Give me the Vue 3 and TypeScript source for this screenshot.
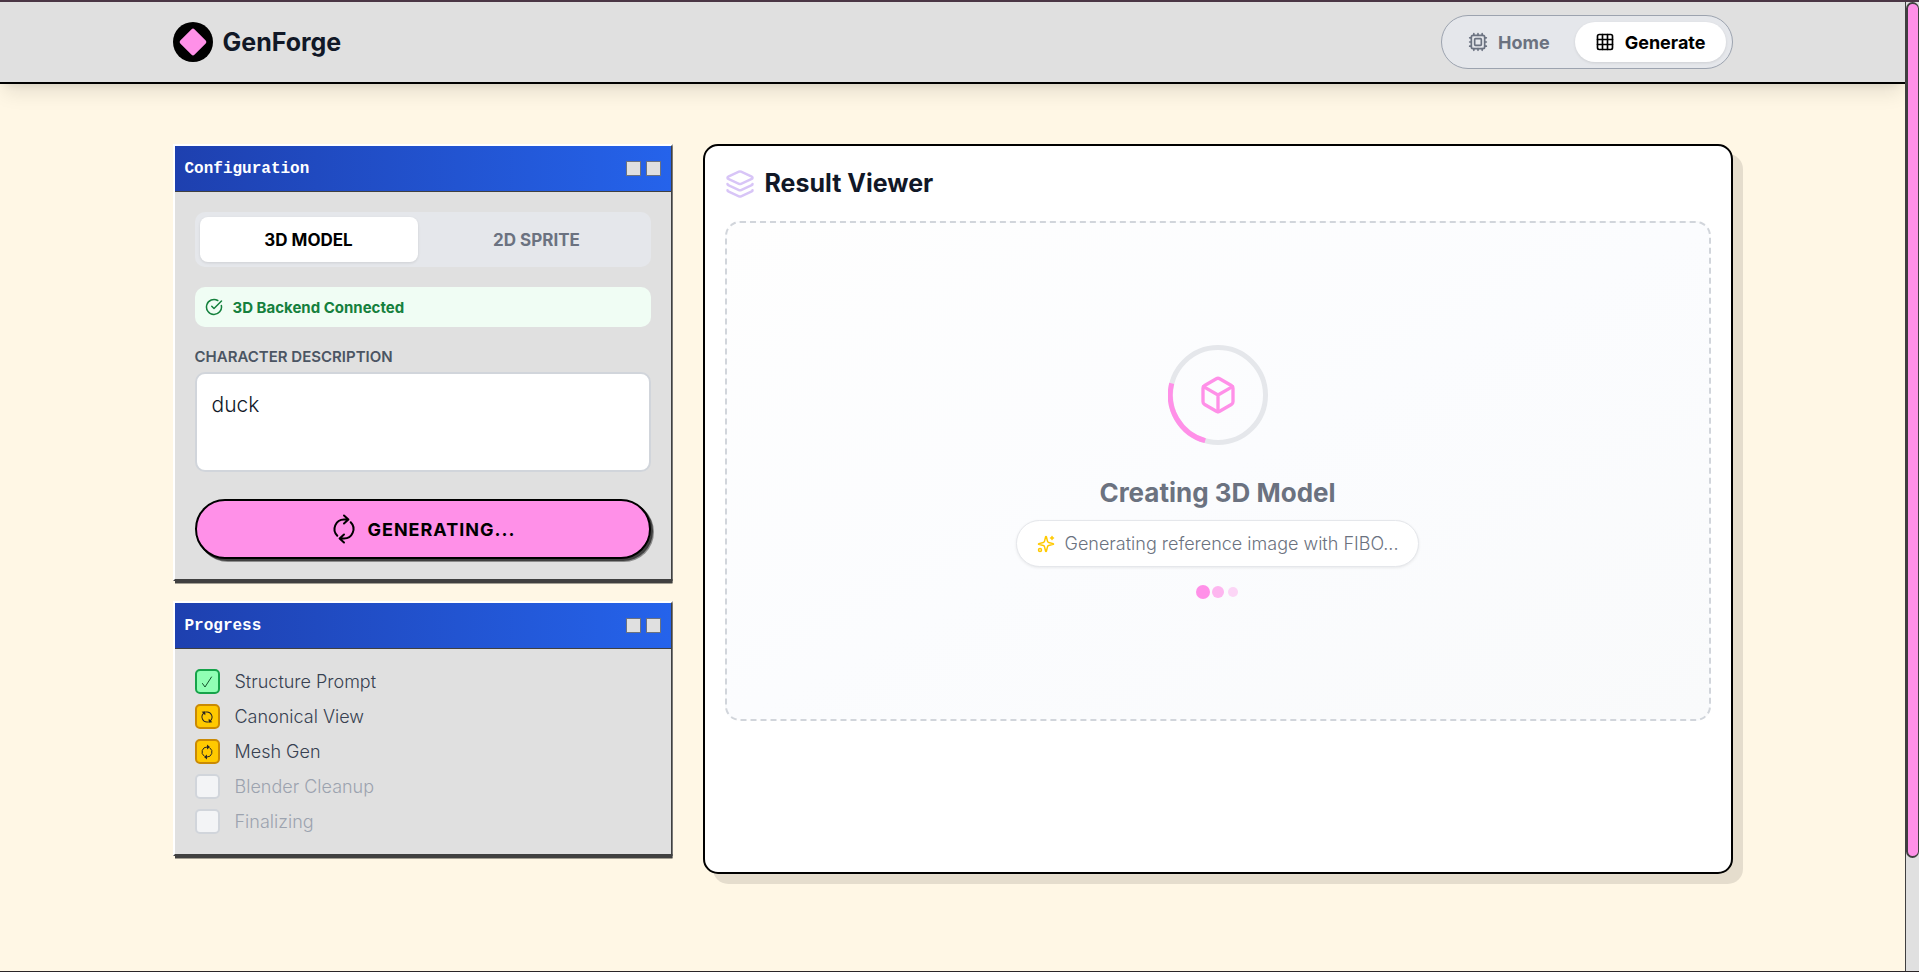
<script setup lang="ts">
import { ref } from 'vue'

type Status = 'done' | 'active' | 'pending'
interface Step {
  label: string
  status: Status
  turned?: boolean
}

const mode = ref<'3d' | '2d'>('3d')
const description = ref('duck')

const steps: Step[] = [
  { label: 'Structure Prompt', status: 'done' },
  { label: 'Canonical View', status: 'active', turned: true },
  { label: 'Mesh Gen', status: 'active' },
  { label: 'Blender Cleanup', status: 'pending' },
  { label: 'Finalizing', status: 'pending' },
]
</script>

<template>
  <div class="app">
    <div class="page">
      <header class="topbar">
        <div class="topbar-inner">
          <div class="brand">
            <span class="logo"><span class="diamond"></span></span>
            <span class="brand-name">GenForge</span>
          </div>
          <nav class="nav">
            <a href="#home" class="nav-link">
              <svg class="nav-icon" viewBox="0 0 24 24">
                <rect x="4" y="4" width="16" height="16" rx="2" />
                <rect x="8" y="8" width="8" height="8" rx="1" />
                <path d="M12 20v2M12 2v2M17 20v2M17 2v2M7 20v2M7 2v2M2 12h2M2 17h2M2 7h2M20 12h2M20 17h2M20 7h2" />
              </svg>
              Home
            </a>
            <a href="#generate" class="nav-link current" aria-current="page">
              <svg class="nav-icon" viewBox="0 0 24 24">
                <rect x="3" y="3" width="18" height="18" rx="2" />
                <path d="M3 9h18M3 15h18M9 3v18M15 3v18" />
              </svg>
              Generate
            </a>
          </nav>
        </div>
      </header>

      <main class="content">
        <div class="sidebar">
          <section class="window">
            <div class="titlebar">
              <h2 class="window-title">Configuration</h2>
              <span class="controls"><i></i><i></i></span>
            </div>
            <div class="window-body">
              <div class="switch">
                <button type="button" :class="{ on: mode === '3d' }" @click="mode = '3d'">3D MODEL</button>
                <button type="button" :class="{ on: mode === '2d' }" @click="mode = '2d'">2D SPRITE</button>
              </div>
              <div class="status">
                <svg class="status-icon" viewBox="0 0 24 24">
                  <path d="M21.8 10A10 10 0 1 1 17 3.335" />
                  <path d="m9 11 3 3L22 4" />
                </svg>
                3D Backend Connected
              </div>
              <div class="field">
                <label for="description">CHARACTER DESCRIPTION</label>
                <textarea id="description" v-model="description"></textarea>
              </div>
              <button type="button" class="generate">
                <svg class="generate-icon" viewBox="-15 -15 30 30">
                  <path d="M-6.7 6.7A9.5 9.5 0 0 1 0 -9.5H4M0 -13.5L4.4 -9.5L0 -5.5" />
                  <path d="M6.7 -6.7A9.5 9.5 0 0 1 0 9.5H-4M0 13.5L-4.4 9.5L0 5.5" />
                </svg>
                GENERATING...
              </button>
            </div>
          </section>

          <section class="window">
            <div class="titlebar">
              <h2 class="window-title">Progress</h2>
              <span class="controls"><i></i><i></i></span>
            </div>
            <ul class="window-body steps">
              <li v-for="step in steps" :key="step.label" :class="step.status">
                <span class="box">
                  <svg v-if="step.status === 'done'" viewBox="-10 -10 20 20">
                    <path d="M-4.5 1.5L-2 5L4.5 -5" />
                  </svg>
                  <svg v-else-if="step.status === 'active'" viewBox="-10 -10 20 20" :class="{ turned: step.turned }">
                    <path d="M-3 4A5 5 0 0 1 0 -5H1" />
                    <path d="M3 -4A5 5 0 0 1 0 5H-1" />
                    <path class="head" d="M0 -7.5L3 -5L0 -2.5ZM0 7.5L-3 5L0 2.5Z" />
                  </svg>
                </span>
                {{ step.label }}
              </li>
            </ul>
          </section>
        </div>

        <section class="viewer">
          <h2 class="viewer-title">
            <svg class="layers" viewBox="0 0 24 24">
              <path d="M12.83 2.18a2 2 0 0 0-1.66 0L2.6 6.08a1 1 0 0 0 0 1.83l8.58 3.91a2 2 0 0 0 1.66 0l8.58-3.9a1 1 0 0 0 0-1.83z" />
              <path d="M2 12a1 1 0 0 0 .58.91l8.6 3.91a2 2 0 0 0 1.65 0l8.58-3.9A1 1 0 0 0 22 12" />
              <path d="M2 17a1 1 0 0 0 .58.91l8.6 3.91a2 2 0 0 0 1.65 0l8.58-3.9A1 1 0 0 0 22 17" />
            </svg>
            Result Viewer
          </h2>
          <div class="stage">
            <div class="spinner">
              <svg class="ring" viewBox="0 0 100 100">
                <circle cx="50" cy="50" r="47.5" stroke="#e5e7eb" />
                <path d="M3.7 38.4A47.5 47.5 0 0 0 37.2 95.7" stroke="#ff90e8" />
              </svg>
              <svg class="cube" viewBox="0 0 24 24">
                <path d="M21 8a2 2 0 0 0-1-1.73l-7-4a2 2 0 0 0-2 0l-7 4A2 2 0 0 0 3 8v8a2 2 0 0 0 1 1.73l7 4a2 2 0 0 0 2 0l7-4A2 2 0 0 0 21 16Z" />
                <path d="m3.3 7 8.7 5 8.7-5M12 22V12" />
              </svg>
            </div>
            <h3 class="stage-title">Creating 3D Model</h3>
            <p class="stage-note">
              <svg class="sparkles" viewBox="0 0 24 24">
                <path d="M9.94 15.5A2 2 0 0 0 8.5 14.06l-6.14-1.58a.5.5 0 0 1 0-.96L8.5 9.94A2 2 0 0 0 9.94 8.5l1.58-6.14a.5.5 0 0 1 .96 0L14.06 8.5A2 2 0 0 0 15.5 9.94l6.14 1.58a.5.5 0 0 1 0 .96L15.5 14.06a2 2 0 0 0-1.44 1.44l-1.58 6.14a.5.5 0 0 1-.96 0z" />
                <path d="M20 2v4M22 4h-4" />
                <circle cx="4" cy="20" r="2" />
              </svg>
              Generating reference image with FIBO...
            </p>
            <div class="dots"><i class="big"></i><i class="mid"></i><i class="small"></i></div>
          </div>
        </section>
      </main>
    </div>
    <div class="scroll-track"><div class="scroll-thumb"></div></div>
  </div>
</template>

<style>
body {
  margin: 0;
  background: #fff7e5;
}
</style>

<style scoped>
.app,
.app * {
  box-sizing: border-box;
}
.app {
  display: flex;
  min-height: 100vh;
  border-top: 2px solid #4b3645;
  border-bottom: 1px solid #2a2527;
  background: #fff7e5;
  color: #111827;
  font-family: Inter, "Open Sans", sans-serif;
  font-size: 18px;
}
.page {
  flex: 1;
  min-width: 0;
  overflow: hidden;
}
h2,
h3,
p,
ul {
  margin: 0;
}
button {
  font-family: inherit;
  cursor: pointer;
}
svg {
  display: block;
  flex-shrink: 0;
  fill: none;
  stroke: currentColor;
  stroke-width: 2;
  stroke-linecap: round;
  stroke-linejoin: round;
}

.topbar {
  padding: 0 20px;
  background: #e0e0e0;
  border-bottom: 2px solid #000;
  box-shadow: 0 12px 19px -4px rgba(0, 0, 0, 0.1), 0 5px 8px -5px rgba(0, 0, 0, 0.1);
}
.topbar-inner {
  display: flex;
  align-items: center;
  justify-content: space-between;
  max-width: 1560px;
  height: 80px;
  margin: 0 auto;
}
.brand {
  display: flex;
  align-items: center;
  gap: 10px;
}
.logo {
  display: flex;
  align-items: center;
  justify-content: center;
  width: 40px;
  height: 40px;
  border-radius: 50%;
  background: #000;
}
.diamond {
  width: 20px;
  height: 20px;
  border-radius: 2px;
  background: #ff90e8;
  transform: rotate(45deg);
}
.brand-name {
  font-size: 25px;
  font-weight: 700;
}
.nav {
  display: flex;
  gap: 5px;
  padding: 6px;
  border: 1px solid #9ca3af;
  border-radius: 27px;
  background: #e5e7eb;
}
.nav-link {
  display: flex;
  align-items: center;
  gap: 10px;
  height: 40px;
  padding: 0 20px;
  border-radius: 20px;
  color: #6b7280;
  font-weight: 700;
  text-decoration: none;
}
.nav-link.current {
  background: #fff;
  color: #000;
  box-shadow: 0 1px 3px rgba(0, 0, 0, 0.1);
}
.nav-icon {
  width: 20px;
  height: 20px;
}

.content {
  display: grid;
  grid-template-columns: repeat(12, minmax(0, 1fr));
  gap: 30px;
  align-items: start;
  max-width: 1600px;
  margin: 0 auto;
  padding: 60px 20px;
}
.sidebar {
  grid-column: span 4;
  display: flex;
  flex-direction: column;
  gap: 20px;
  clip-path: inset(0 0 -5px 0);
}
.window {
  border: 2px solid;
  border-color: #fff #404040 #404040 #fff;
  background: #e0e0e0;
  box-shadow: 2px 2px 0 #404040, 2px 3px 0 #a39f93;
}
.titlebar {
  display: flex;
  align-items: center;
  justify-content: space-between;
  height: 46px;
  padding: 0 10px;
  border-bottom: 1px solid #404040;
  background: linear-gradient(to right, #1e40af, #2563eb);
}
.window-title {
  color: #fff;
  font-family: "Liberation Mono", monospace;
  font-size: 16px;
  font-weight: 700;
}
.controls {
  display: flex;
  gap: 5px;
}
.controls i {
  width: 15px;
  height: 15px;
  border: 1px solid #6b7280;
  background: #e0e0e0;
}
.window-body {
  padding: 20px;
}
.switch {
  display: grid;
  grid-template-columns: 1fr 1fr;
  gap: 10px;
  padding: 5px;
  border-radius: 10px;
  background: #e5e7eb;
}
.switch button {
  height: 45px;
  border: 0;
  border-radius: 8px;
  background: transparent;
  color: #6b7280;
  font-size: 17px;
  font-weight: 700;
}
.switch .on {
  background: #fff;
  color: #000;
  box-shadow: 0 1px 3px rgba(0, 0, 0, 0.1);
}
.status {
  display: flex;
  align-items: center;
  gap: 10px;
  height: 40px;
  margin-top: 20px;
  padding: 0 10px;
  border-radius: 10px;
  background: #f0fdf4;
  color: #15803d;
  font-size: 15px;
  font-weight: 700;
}
.status-icon {
  width: 18px;
  height: 18px;
}
.field {
  display: flex;
  flex-direction: column;
  gap: 5px;
  margin: 20px 0 27px;
}
.field label {
  color: #4b5563;
  font-size: 15px;
  font-weight: 600;
  line-height: 20px;
}
.field textarea {
  height: 100px;
  padding: 15px;
  border: 2px solid #d1d5db;
  border-radius: 10px;
  background: #fff;
  color: #111827;
  font-family: inherit;
  font-size: 21px;
  font-weight: 300;
  line-height: 32px;
  resize: none;
}
.generate {
  display: flex;
  align-items: center;
  justify-content: center;
  gap: 8px;
  width: 100%;
  height: 60px;
  border: 2px solid #000;
  border-radius: 30px;
  background: #ff90e8;
  color: #000;
  font-size: 18px;
  font-weight: 700;
  letter-spacing: 1px;
  box-shadow: 2px 2px 0 #404040, 3px 3px 0 #8c8c8c;
}
.generate-icon {
  width: 30px;
  height: 30px;
}
.steps {
  display: flex;
  flex-direction: column;
  gap: 10px;
  list-style: none;
}
.steps li {
  display: flex;
  align-items: center;
  gap: 15px;
  height: 25px;
  color: #374151;
  font-weight: 300;
}
.steps .pending {
  color: #9ca3af;
}
.box {
  display: flex;
  align-items: center;
  justify-content: center;
  width: 25px;
  height: 25px;
  border: 2px solid #d1d5db;
  border-radius: 5px;
  background: #f3f4f6;
  color: #14532d;
}
.box svg {
  width: 20px;
  height: 20px;
  stroke-width: 1;
}
.box .head {
  fill: currentColor;
  stroke: none;
}
.box .turned {
  transform: rotate(-45deg);
}
.done .box {
  border-color: #16a34a;
  background: #90ffb4;
}
.active .box {
  border-color: #ca8a04;
  background: #ffc900;
  color: #292524;
}

.viewer {
  grid-column: span 8;
  min-height: 730px;
  padding: 20px;
  border: 2px solid #000;
  border-radius: 15px;
  background: #fff;
  box-shadow: 10px 10px 0 rgba(0, 0, 0, 0.1);
}
.viewer-title {
  display: flex;
  align-items: center;
  gap: 10px;
  margin-bottom: 20px;
  font-size: 25px;
  font-weight: 700;
  line-height: 35px;
}
.layers {
  width: 30px;
  height: 30px;
  color: #d8c5f7;
}
.stage {
  display: flex;
  flex-direction: column;
  align-items: center;
  justify-content: center;
  min-height: 500px;
  border: 2px dashed #d1d5db;
  border-radius: 15px;
  background: linear-gradient(to bottom right, #fefefe, #fbfcfe 50%, #f9fafb);
  color: #6b7280;
}
.spinner {
  display: grid;
  place-items: center;
  width: 100px;
  height: 100px;
}
.spinner svg {
  grid-area: 1 / 1;
}
.ring {
  width: 100px;
  height: 100px;
  stroke-width: 5;
  stroke-linecap: butt;
}
.cube {
  width: 40px;
  height: 40px;
  color: #ff90e8;
}
.stage-title {
  margin: 30px 0 10px;
  font-size: 26px;
  font-weight: 700;
  line-height: 35px;
}
.stage-note {
  display: flex;
  align-items: center;
  gap: 10px;
  height: 47px;
  padding: 0 20px;
  border: 1px solid #e5e7eb;
  border-radius: 24px;
  background: #fff;
  font-weight: 300;
  box-shadow: 0 1px 3px rgba(0, 0, 0, 0.08);
}
.sparkles {
  width: 18px;
  height: 18px;
  color: #ffc900;
}
.dots {
  display: flex;
  gap: 5px;
  margin-top: 20px;
}
.dots i {
  width: 10px;
  height: 10px;
  border-radius: 50%;
  background: #ff90e8;
}
.dots .big {
  transform: scale(1.4);
}
.dots .mid {
  opacity: 0.65;
  transform: scale(1.2);
}
.dots .small {
  opacity: 0.35;
}

.scroll-track {
  width: 14px;
  border-left: 1px solid #404040;
  background: #e0e0e0;
}
.scroll-thumb {
  height: 88.3%;
  border: 2px solid #404040;
  border-right-width: 1px;
  border-radius: 10px;
  background: #ff90e8;
}
</style>
